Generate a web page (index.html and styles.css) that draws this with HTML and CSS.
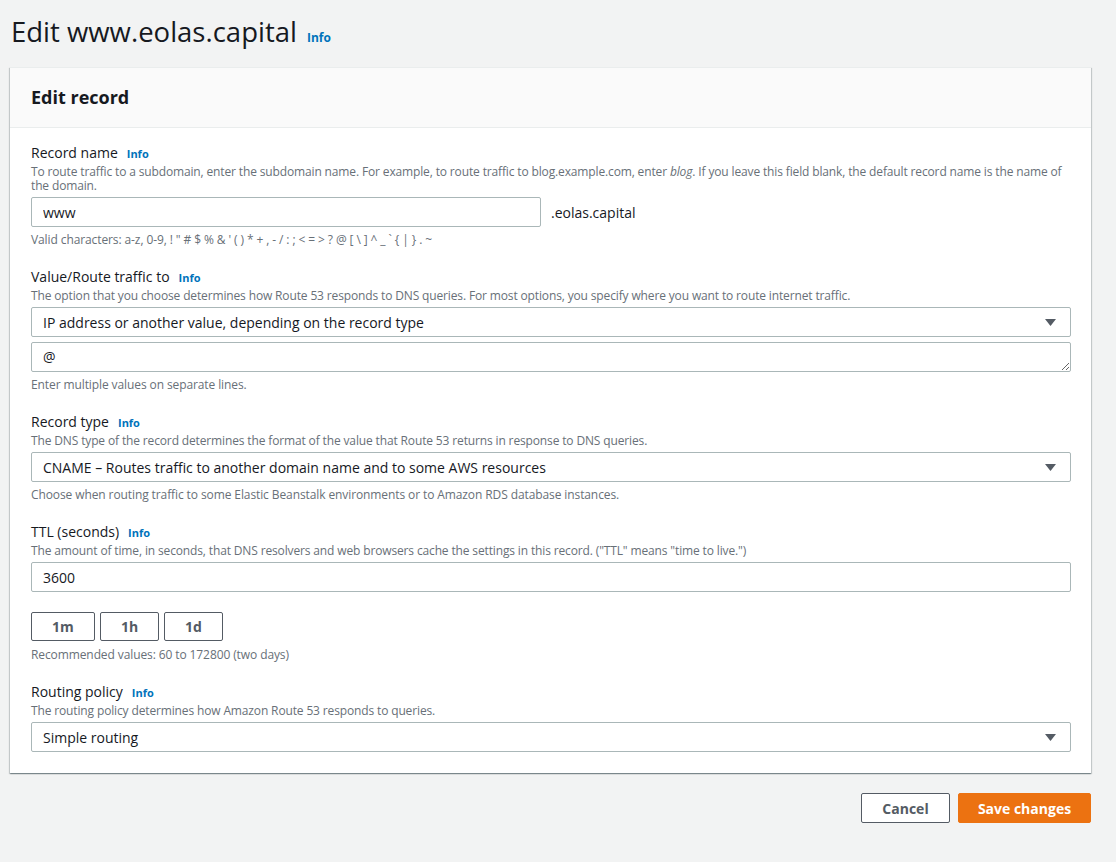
FILE: index.html
```html
<!DOCTYPE html>
<html lang="en">
<head>
<meta charset="utf-8">
<title>Edit www.eolas.capital</title>
<link rel="stylesheet" href="styles.css">
</head>
<body>
<div class="page">
  <h1 class="page-title">Edit www.eolas.capital <a class="info" href="#">Info</a></h1>

  <div class="card">
    <div class="card-header"><h2>Edit record</h2></div>
    <div class="card-body">

      <div class="field">
        <div class="label">Record name <a class="info" href="#">Info</a></div>
        <div class="desc">To route traffic to a subdomain, enter the subdomain name. For example, to route traffic to blog.example.com, enter <i>blog</i>. If you leave this field blank, the default record name is the name of the domain.</div>
        <div class="control-row">
          <input class="input short" type="text" value="www">
          <span class="suffix">.eolas.capital</span>
        </div>
        <div class="hint">Valid characters: a-z, 0-9, ! " # $ % &amp; ' ( ) * + , - / : ; &lt; = &gt; ? @ [ \ ] ^ _ ` { | } . ~</div>
      </div>

      <div class="field">
        <div class="label">Value/Route traffic to <a class="info" href="#">Info</a></div>
        <div class="desc">The option that you choose determines how Route 53 responds to DNS queries. For most options, you specify where you want to route internet traffic.</div>
        <div class="select">
          <span>IP address or another value, depending on the record type</span>
          <svg class="caret" width="11" height="7" viewBox="0 0 11 7"><path d="M0 0H11L5.5 7Z" fill="#545b64"/></svg>
        </div>
        <textarea class="textarea" rows="1">@</textarea>
        <div class="hint">Enter multiple values on separate lines.</div>
      </div>

      <div class="field">
        <div class="label">Record type <a class="info" href="#">Info</a></div>
        <div class="desc">The DNS type of the record determines the format of the value that Route 53 returns in response to DNS queries.</div>
        <div class="select">
          <span>CNAME – Routes traffic to another domain name and to some AWS resources</span>
          <svg class="caret" width="11" height="7" viewBox="0 0 11 7"><path d="M0 0H11L5.5 7Z" fill="#545b64"/></svg>
        </div>
        <div class="hint">Choose when routing traffic to some Elastic Beanstalk environments or to Amazon RDS database instances.</div>
      </div>

      <div class="field">
        <div class="label">TTL (seconds) <a class="info" href="#">Info</a></div>
        <div class="desc">The amount of time, in seconds, that DNS resolvers and web browsers cache the settings in this record. ("TTL" means "time to live.")</div>
        <input class="input full" type="text" value="3600">
        <div class="ttl-buttons">
          <button class="ttl-btn wide">1m</button>
          <button class="ttl-btn">1h</button>
          <button class="ttl-btn">1d</button>
        </div>
        <div class="hint">Recommended values: 60 to 172800 (two days)</div>
      </div>

      <div class="field">
        <div class="label">Routing policy <a class="info" href="#">Info</a></div>
        <div class="desc">The routing policy determines how Amazon Route 53 responds to queries.</div>
        <div class="select">
          <span>Simple routing</span>
          <svg class="caret" width="11" height="7" viewBox="0 0 11 7"><path d="M0 0H11L5.5 7Z" fill="#545b64"/></svg>
        </div>
      </div>

    </div>
  </div>

  <div class="actions">
    <button class="btn btn-normal">Cancel</button>
    <button class="btn btn-primary">Save changes</button>
  </div>
</div>
</body>
</html>
```
FILE: styles.css
```css
* { box-sizing: border-box; }
html, body { margin: 0; padding: 0; }
body {
  background: #f2f3f3;
  font-family: "Open Sans", "Noto Sans", sans-serif;
  color: #16191f;
  font-size: 14px;
}
.page {
  padding: 14px 25px 0 10px;
}
.page-title {
  margin: 0 0 11px 1px;
  font-size: 27.5px;
  font-weight: 400;
  line-height: 36px;
  display: flex;
  align-items: baseline;
  gap: 10px;
}
.info {
  color: #0073bb;
  font-size: 12px;
  font-weight: 700;
  text-decoration: none;
}
.card {
  background: #fff;
  border-top: 1px solid #eaeded;
  box-shadow: 0 1px 1px 0 rgba(0,28,36,.3), 1px 1px 1px 0 rgba(0,28,36,.15), -1px 1px 1px 0 rgba(0,28,36,.15);
}
.card-header {
  background: #fafafa;
  border-bottom: 1px solid #eaeded;
  padding: 17px 20px 18px 21px;
}
.card-header h2 {
  margin: 0;
  font-size: 18px;
  font-weight: 700;
  line-height: 24px;
}
.card-body {
  padding: 15px 20px 21px 21px;
  display: flex;
  flex-direction: column;
  gap: 20px;
}
.field {
  display: flex;
  flex-direction: column;
}
.label {
  font-size: 14px;
  line-height: 20px;
  display: flex;
  align-items: baseline;
  gap: 9px;
}
.label .info { font-size: 11px; }
.desc {
  font-size: 12px;
  line-height: 14px;
  color: #687078;
  margin-top: 1px;
  margin-bottom: 4px;
  letter-spacing: -0.14px;
}
.hint {
  font-size: 12px;
  line-height: 14px;
  color: #687078;
  margin-top: 6px;
  letter-spacing: -0.1px;
}
.control-row {
  display: flex;
  align-items: center;
  gap: 10px;
}
.input, .select, .textarea {
  height: 30px;
  border: 1px solid #aab7b8;
  border-radius: 2px;
  background: #fff;
  font-family: inherit;
  font-size: 14px;
  color: #16191f;
  padding: 0 11px;
}
.input.short { width: 510px; }
.input.full { width: 100%; }
.suffix { font-size: 14px; }
.select {
  display: flex;
  align-items: center;
  justify-content: space-between;
  padding-right: 14px;
}
.textarea {
  margin-top: 5px;
  padding-top: 5px;
  line-height: 18px;
  resize: vertical;
  display: block;
  width: 100%;
}
.ttl-buttons {
  display: flex;
  gap: 5px;
  margin-top: 20px;
  margin-bottom: 1px;
}
.ttl-btn {
  width: 59px;
  height: 29px;
  background: #fff;
  border: 1px solid #545b64;
  border-radius: 2px;
  font-family: inherit;
  font-weight: 700;
  font-size: 14px;
  color: #545b64;
}
.ttl-btn.wide { width: 64px; }
.actions {
  display: flex;
  justify-content: flex-end;
  gap: 8px;
  margin-top: 20px;
}
.btn {
  height: 30px;
  border-radius: 2px;
  font-family: inherit;
  font-weight: 700;
  font-size: 14px;
  padding: 0;
  white-space: nowrap;
}
.btn-normal {
  width: 89px;
  background: #fff;
  border: 1px solid #545b64;
  color: #545b64;
}
.btn-primary {
  width: 133px;
  background: #ec7211;
  border: 1px solid #ec7211;
  color: #fff;
}
```
